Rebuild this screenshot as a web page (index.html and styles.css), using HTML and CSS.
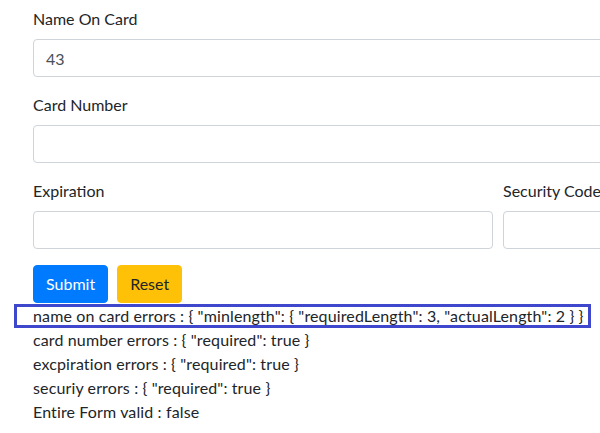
FILE: index.html
```html
<!DOCTYPE html>
<html>
<head>
<meta charset="utf-8">
<link rel="stylesheet" href="styles.css">
</head>
<body>
<div class="page">
  <form class="form">
    <div class="group">
      <label class="label">Name On Card</label>
      <input class="input" type="text" value="43">
    </div>
    <div class="group">
      <label class="label">Card Number</label>
      <input class="input" type="text">
    </div>
    <div class="row">
      <div class="group col">
        <label class="label">Expiration</label>
        <input class="input" type="text">
      </div>
      <div class="group col">
        <label class="label">Security Code</label>
        <input class="input" type="text">
      </div>
    </div>
    <div class="buttons">
      <button type="button" class="btn btn-primary">Submit</button>
      <button type="button" class="btn btn-warning">Reset</button>
    </div>
  </form>
  <div class="errors">
    <div class="line highlighted">name on card errors : { "minlength": { "requiredLength": 3, "actualLength": 2 } }</div>
    <div class="line">card number errors : { "required": true }</div>
    <div class="line">excpiration errors : { "required": true }</div>
    <div class="line">securiy errors : { "required": true }</div>
    <div class="line">Entire Form valid : false</div>
  </div>
</div>
</body>
</html>
```
FILE: styles.css
```css
html, body {
  margin: 0;
  padding: 0;
  overflow: hidden;
  background: #fff;
}
body {
  font-family: Lato, "Liberation Sans", sans-serif;
  font-size: 16px;
  line-height: 24px;
  color: #212529;
}
.page {
  padding: 7px 0 0 33px;
  width: 940px;
}
.form {
  margin: 0;
}
.group {
  display: flex;
  flex-direction: column;
  margin-bottom: 16px;
}
.label {
  margin-bottom: 8px;
}
.input {
  box-sizing: border-box;
  height: 38px;
  width: 100%;
  padding: 6px 12px;
  border: 1px solid #ced4da;
  border-radius: 4px;
  font-family: inherit;
  font-size: 16px;
  color: #495057;
  background: #fff;
  margin: 0;
}
.row {
  display: flex;
  gap: 10px;
}
.col {
  flex: 0 0 460px;
}
.buttons {
  display: flex;
  gap: 9px;
}
.btn {
  height: 38px;
  padding: 6px 12px;
  border: 1px solid transparent;
  border-radius: 4px;
  font-family: inherit;
  font-size: 16px;
  line-height: 24px;
  margin: 0;
}
.btn-primary {
  background: #007bff;
  border-color: #007bff;
  color: #fff;
}
.btn-warning {
  background: #ffc107;
  border-color: #ffc107;
  color: #212529;
}
.errors {
  padding-top: 1px;
  letter-spacing: 0.13px;
}
.line {
  height: 24px;
  white-space: nowrap;
}
.highlighted {
  box-sizing: border-box;
  margin-left: -19px;
  padding-left: 19px;
  width: 577px;
  box-shadow: inset 0 0 0 3px #3f48cc;
}
```
